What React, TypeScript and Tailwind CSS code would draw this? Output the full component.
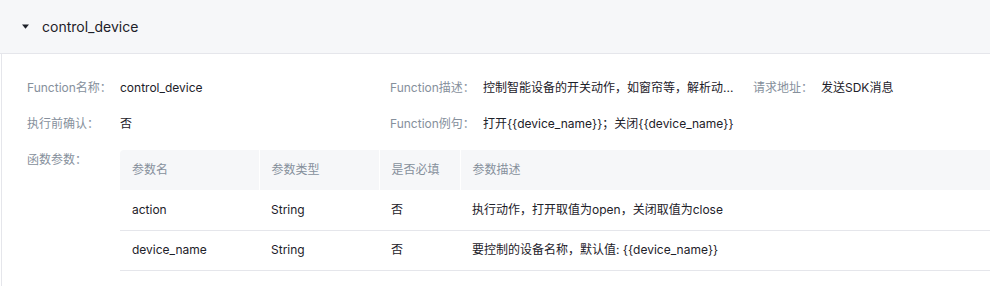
import React from "react";

const font = { fontFamily: 'Inter, "Noto Sans CJK SC", sans-serif' };

interface Param {
  name: string;
  type: string;
  required: string;
  desc: string;
}

const params: Param[] = [
  { name: "action", type: "String", required: "否", desc: "执行动作，打开取值为open，关闭取值为close" },
  { name: "device_name", type: "String", required: "否", desc: "要控制的设备名称，默认值: {{device_name}}" },
];

const Field = ({ label, value, narrow }: { label: string; value: string; narrow?: boolean }) => (
  <div className="flex w-[363px] shrink-0 items-center">
    <span className={`${narrow ? "w-[68px]" : "w-[93px]"} shrink-0 text-[#86909c]`}>{label}</span>
    <span className="w-[256px] truncate text-[#1d2129]">{value}</span>
  </div>
);

export default function App() {
  return (
    <div className="h-[286px] w-[990px] overflow-hidden bg-white text-[12px] leading-5" style={font}>
      {/* Cabeçalho do painel */}
      <div className="flex h-[54px] items-center border-b border-[#e5e6eb] bg-[#f6f7f9] pl-[22px]">
        <svg width="7" height="5" viewBox="0 0 7 5" className="mr-[13px]">
          <path d="M0 0.5 L7 0.5 L3.5 4.8 Z" fill="#1d2129" />
        </svg>
        <span className="text-[14px] text-[#1d2129]">control_device</span>
      </div>

      <div className="ml-px h-full border-l border-[#e5e6eb] pl-[25px] pt-[24px]">
        <div className="flex">
          <Field label="Function名称：" value="control_device" />
          <Field label="Function描述：" value="控制智能设备的开关动作，如窗帘等，解析动..." />
          <Field label="请求地址：" value="发送SDK消息" narrow />
        </div>
        <div className="mt-4 flex">
          <Field label="执行前确认：" value="否" />
          <Field label="Function例句：" value="打开{{device_name}}；关闭{{device_name}}" />
        </div>

        <div className="mt-4 flex">
          <span className="w-[93px] shrink-0 text-[#86909c]">函数参数：</span>
          <table className="w-[871px] shrink-0 border-collapse text-left">
            <thead>
              <tr className="h-10 bg-[#f6f7f9] text-[#86909c]">
                <th className="w-[139px] rounded-tl font-normal pl-3 border-r border-white">参数名</th>
                <th className="w-[120px] font-normal pl-3 border-r border-white">参数类型</th>
                <th className="w-[81px] font-normal pl-3 border-r border-white">是否必填</th>
                <th className="font-normal pl-3">参数描述</th>
              </tr>
            </thead>
            <tbody className="text-[#1d2129]">
              {params.map((p) => (
                <tr key={p.name} className="h-10 border-b border-[#e5e6eb]">
                  <td className="pl-3">{p.name}</td>
                  <td className="pl-3">{p.type}</td>
                  <td className="pl-3">{p.required}</td>
                  <td className="pl-3">{p.desc}</td>
                </tr>
              ))}
            </tbody>
          </table>
        </div>
      </div>
    </div>
  );
}
